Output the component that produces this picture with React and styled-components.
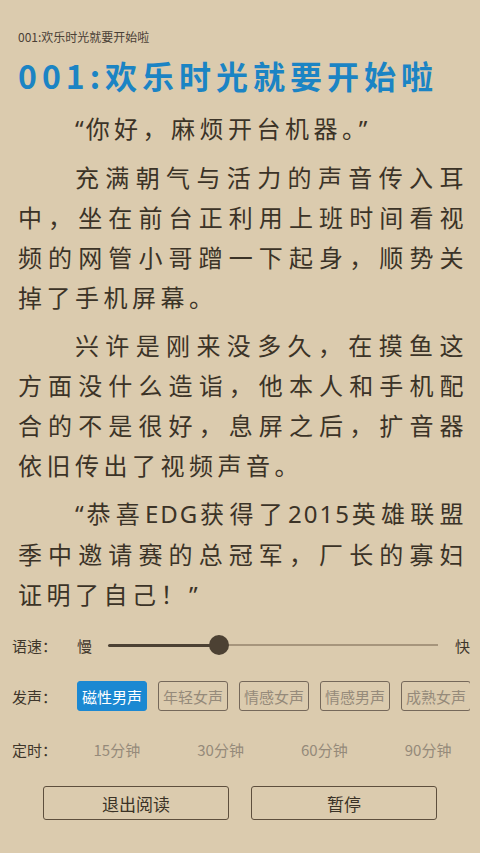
import React from 'react';
import styled, { createGlobalStyle } from 'styled-components';

const GlobalStyle = createGlobalStyle`
  html, body {
    margin: 0;
    padding: 0;
    background: #dbcbae;
  }
  body {
    font-family: "Noto Sans CJK SC", "Noto Sans", sans-serif;
  }
`;

const Page = styled.div`
  width: 480px;
  height: 853px;
  overflow: hidden;
  background: #dbcbae;
  display: flex;
  flex-direction: column;
`;

const Reader = styled.div`
  padding: 29px 12px 0 18px;
`;

const RunningHead = styled.div`
  font-size: 12px;
  line-height: 16px;
  color: #4a4036;
`;

const ChapterTitle = styled.h1`
  margin: 10px 0 13px;
  font-size: 32px;
  line-height: 40px;
  font-weight: 700;
  letter-spacing: 5px;
  color: #1b84c4;
  white-space: nowrap;
`;

const Paragraph = styled.p`
  margin: 0 0 8px;
  font-size: 24px;
  line-height: 40px;
  letter-spacing: 4.5px;
  text-indent: 57px;
  text-align: justify;
  color: #3b3327;
`;

// latin runs and curly quotes are set tighter than the CJK text around them
const Latin = styled.span`
  font-family: "Noto Sans", sans-serif;
  letter-spacing: 2px;
`;

const Controls = styled.div`
  margin-top: auto;
  padding: 0 0 33px 12px;
  display: flex;
  flex-direction: column;
`;

const Row = styled.div`
  display: flex;
  align-items: center;
  height: ${(p) => p.$h}px;
  margin-bottom: ${(p) => p.$mb || 0}px;
  padding-right: ${(p) => p.$pr || 0}px;
  overflow: hidden;
`;

const Label = styled.span`
  flex: none;
  width: ${(p) => p.$w}px;
  font-size: 15px;
  color: #3e362b;
`;

const EndMark = styled.span`
  flex: none;
  font-size: 15px;
  color: #3e362b;
`;

const Track = styled.div`
  position: relative;
  flex: 1;
  height: 20px;
  margin: 0 17px 0 16px;
  display: flex;
  align-items: center;
`;

const TrackDone = styled.div`
  height: 3px;
  background: #4c4133;
  border-radius: 2px;
`;

const TrackRest = styled.div`
  flex: 1;
  height: 2px;
  background: #a6957c;
`;

const Thumb = styled.div`
  position: absolute;
  top: 0;
  width: 20px;
  height: 20px;
  margin-left: -10px;
  border-radius: 50%;
  background: #4c4133;
`;

const Chips = styled.div`
  display: flex;
  gap: 11px;
  overflow: hidden;
  flex: 1;
`;

const Chip = styled.button`
  flex: none;
  width: 70px;
  height: 30px;
  padding: 0;
  border-radius: 3px;
  border: 1.5px solid ${(p) => (p.$active ? '#1b88d2' : '#75685a')};
  background: ${(p) => (p.$active ? '#1b88d2' : 'transparent')};
  color: ${(p) => (p.$active ? '#ffffff' : '#958a7a')};
  font-family: "Noto Sans CJK SC", sans-serif;
  font-size: 15px;
  line-height: 1;
  white-space: nowrap;
`;

const Timers = styled.div`
  flex: 1;
  display: grid;
  grid-template-columns: repeat(4, 1fr);
`;

const TimerOption = styled.span`
  text-align: center;
  font-size: 15px;
  color: #958a7a;
`;

const Actions = styled.div`
  display: flex;
  justify-content: center;
  gap: 22px;
  margin-left: -12px;
`;

const ActionButton = styled.button`
  width: 186px;
  height: 34px;
  border: 1.5px solid #5e4f3d;
  border-radius: 3px;
  background: transparent;
  color: #3a3226;
  font-family: "Noto Sans CJK SC", sans-serif;
  font-size: 17px;
`;

const paragraphs = [
  [<Latin key="q1">“</Latin>, '你好，麻烦开台机器。', <Latin key="q2">”</Latin>],
  ['充满朝气与活力的声音传入耳中，坐在前台正利用上班时间看视频的网管小哥蹭一下起身，顺势关掉了手机屏幕。'],
  ['兴许是刚来没多久，在摸鱼这方面没什么造诣，他本人和手机配合的不是很好，息屏之后，扩音器依旧传出了视频声音。'],
  [
    <Latin key="q1">“</Latin>,
    '恭喜',
    <Latin key="edg">EDG</Latin>,
    '获得了',
    <Latin key="yr">2015</Latin>,
    '英雄联盟季中邀请赛的总冠军，厂长的寡妇证明了自己！',
    <Latin key="q2">”</Latin>,
  ],
];

const voices = ['磁性男声', '年轻女声', '情感女声', '情感男声', '成熟女声'];
const timers = ['15分钟', '30分钟', '60分钟', '90分钟'];

function App() {
  const speed = 0.335;

  return (
    <Page>
      <GlobalStyle />
      <Reader>
        <RunningHead>001:欢乐时光就要开始啦</RunningHead>
        <ChapterTitle>001:欢乐时光就要开始啦</ChapterTitle>
        {paragraphs.map((parts, i) => (
          <Paragraph key={i}>{parts}</Paragraph>
        ))}
      </Reader>

      <Controls>
        <Row $h={30} $mb={21} $pr={10}>
          <Label $w={65}>语速：</Label>
          <EndMark>慢</EndMark>
          <Track>
            <TrackDone style={{ width: `${speed * 100}%` }} />
            <TrackRest />
            <Thumb style={{ left: `${speed * 100}%` }} />
          </Track>
          <EndMark>快</EndMark>
        </Row>

        <Row $h={30} $mb={23} $pr={10}>
          <Label $w={65}>发声：</Label>
          <Chips>
            {voices.map((v, i) => (
              <Chip key={v} $active={i === 0}>{v}</Chip>
            ))}
          </Chips>
        </Row>

        <Row $h={30} $mb={22}>
          <Label $w={53}>定时：</Label>
          <Timers>
            {timers.map((t) => (
              <TimerOption key={t}>{t}</TimerOption>
            ))}
          </Timers>
        </Row>

        <Actions>
          <ActionButton>退出阅读</ActionButton>
          <ActionButton>暂停</ActionButton>
        </Actions>
      </Controls>
    </Page>
  );
}

export default App;
